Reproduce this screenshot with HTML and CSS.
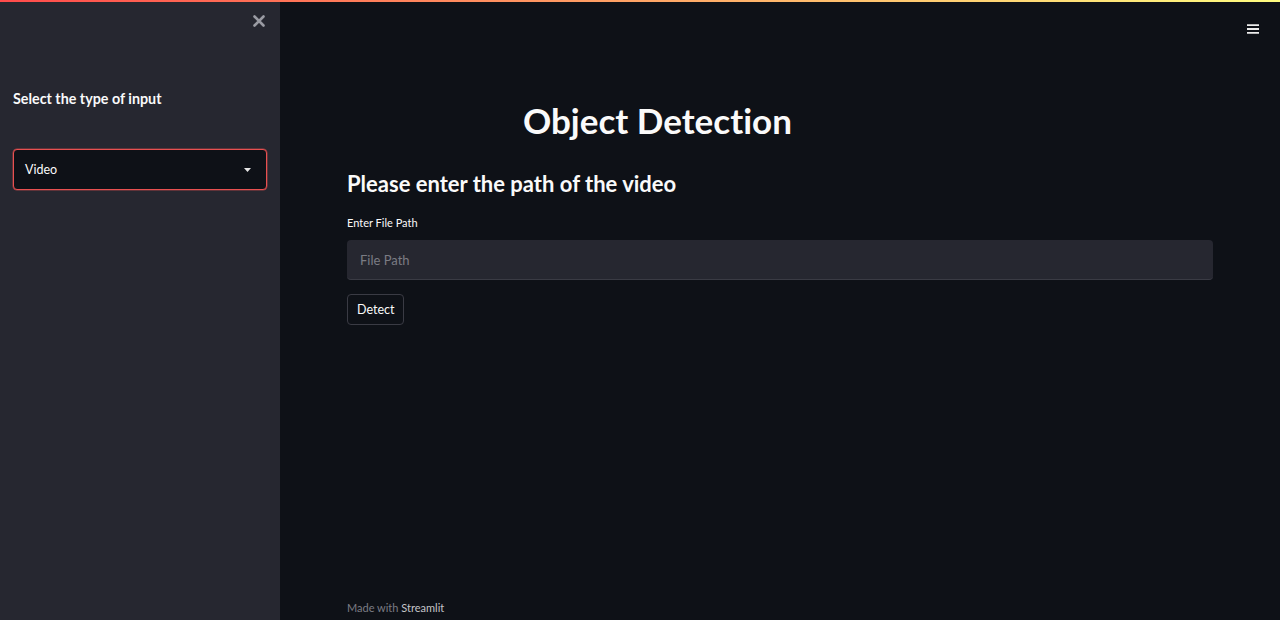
FILE: index.html
```html
<!DOCTYPE html>
<html>
<head>
<meta charset="utf-8">
<link rel="stylesheet" href="styles.css">
</head>
<body>
<div class="topbar"></div>
<div class="app">
  <aside class="sidebar">
    <div class="close">
      <svg width="12" height="12" viewBox="0 0 12 12"><path d="M1.5 1.5L10.5 10.5M10.5 1.5L1.5 10.5" stroke="#9a9ba3" stroke-width="2.6" stroke-linecap="round"/></svg>
    </div>
    <h3 class="side-title">Select the type of input</h3>
    <div class="select">
      <span>Video</span>
      <svg width="7" height="4" viewBox="0 0 7 4"><path d="M0 0H7L3.5 4Z" fill="#e6e6e6"/></svg>
    </div>
  </aside>
  <main class="main">
    <div class="menu">
      <svg width="12" height="10" viewBox="0 0 12 10"><path d="M0 1.2H12M0 5H12M0 8.8H12" stroke="#ececec" stroke-width="1.8"/></svg>
    </div>
    <div class="content">
      <h1 class="title">Object Detection</h1>
      <h2 class="sub">Please enter the path of the video</h2>
      <label class="label">Enter File Path</label>
      <div class="input">File Path</div>
      <button class="btn">Detect</button>
    </div>
    <footer class="footer">Made with <span>Streamlit</span></footer>
  </main>
</div>
</body>
</html>
```
FILE: styles.css
```css
html, body { margin: 0; padding: 0; }
body {
  width: 1280px; height: 620px; overflow: hidden;
  background: #0e1117;
  font-family: "Source Sans Pro", "Lato", "Noto Sans", sans-serif;
  font-variant-ligatures: none;
  color: #fafafa;
  position: relative;
}
.topbar {
  position: absolute; top: 0; left: 0; right: 0; height: 2px;
  background: linear-gradient(90deg, #ff4b4b, #fffd80);
  z-index: 5;
}
.app { display: flex; height: 620px; }
.sidebar {
  width: 280px; flex: none; background: #262730;
  display: flex; flex-direction: column; padding: 0 13px; box-sizing: border-box;
}
.close { display: flex; justify-content: flex-end; padding: 15px 2px 0 0; height: 14px; }
.side-title { margin: 61px 0 0; font-size: 14.3px; font-weight: 700; line-height: 18px; }
.select {
  margin-top: 41px; height: 41px; box-sizing: border-box;
  border: 1px solid #e85050; box-shadow: 0 0 0 0.5px rgba(232,80,80,0.6);
  border-radius: 4px; background: #0e1117;
  display: flex; align-items: center; justify-content: space-between;
  padding: 0 15px 0 11px; font-size: 12.5px;
}
.main { flex: 1; display: flex; flex-direction: column; position: relative; }
.menu { position: absolute; top: 18px; right: 21px; }
.content { padding: 0 67px 0 67px; flex: 1; }
.title { margin: 97px 0 0 176px; font-size: 35px; font-weight: 700; line-height: 46px; }
.sub { margin: 27px 0 0; font-size: 22px; font-weight: 700; line-height: 28px; }
.label { display: block; margin-top: 18px; font-size: 11px; line-height: 14px; }
.input {
  margin-top: 10px; height: 40px; box-sizing: border-box;
  background: #262730; border-radius: 4px; border-bottom: 1px solid #3a3b44;
  padding: 0 13px; display: flex; align-items: center;
  font-size: 13px; color: #7b7c84;
}
.btn {
  margin-top: 14px; height: 31px; padding: 0 9px;
  background: #0e1117; border: 1px solid #3a3b44; border-radius: 4px;
  color: #fafafa; font-family: inherit; font-size: 12.5px;
}
.footer { padding: 0 0 6px 67px; font-size: 11px; color: #7b7c84; }
.footer span { color: #c4c4c8; }
```
